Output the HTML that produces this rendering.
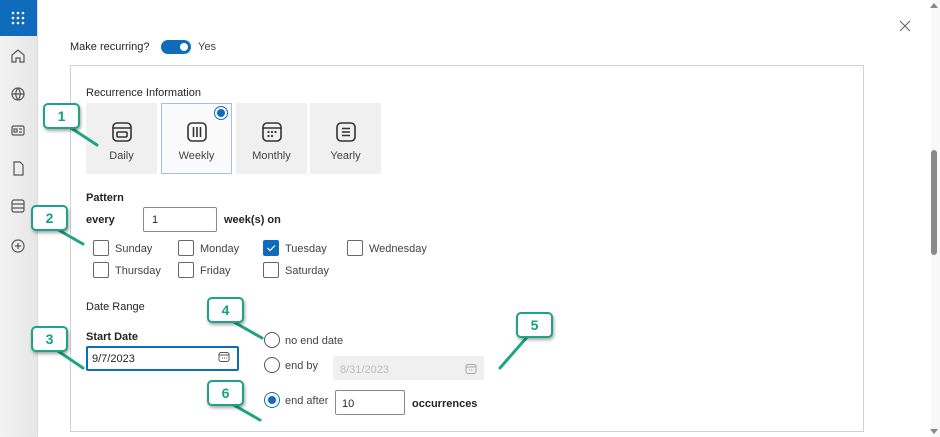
<!DOCTYPE html><html><head><style>
body{margin:0;width:940px;height:437px;overflow:hidden;background:#fff;font-family:"Liberation Sans",sans-serif;font-size:11px;color:#242424;position:relative}
.a{position:absolute}
.b{font-weight:bold}
.tile{position:absolute;top:103px;width:71px;height:71px;background:#f0f0f0;text-align:center;font-size:11px;color:#424242}
.tile svg{position:absolute;left:25px;top:18px}
.tile span{position:absolute;left:0;right:0;top:47px}
.cb{position:absolute;width:14px;height:14px;border:1px solid #666;border-radius:2px;background:#fff}
.rd{position:absolute;width:14px;height:14px;border:1px solid #555;border-radius:50%;background:#fff}
.call{position:absolute;width:33px;height:22px;border:2px solid #1fa385;border-radius:5px;background:#fff;color:#16a07c;font-weight:bold;font-size:14px;text-align:center;line-height:22px;box-shadow:1px 2px 3px rgba(0,0,0,.35)}
.t{margin-top:2px}
</style></head><body>
<div class="a" style="left:0;top:0;width:37px;height:437px;background:linear-gradient(90deg,#f3f3f3,#e6e6e6);border-right:1px solid #ddd"></div>
<div class="a" style="left:0;top:0;width:37px;height:36px;background:#0f6cbd"></div>
<svg class="a" style="left:11px;top:11px" width="14" height="14"><g fill="#fff"><circle cx="2" cy="2" r="1.3"/><circle cx="7" cy="2" r="1.3"/><circle cx="12" cy="2" r="1.3"/><circle cx="2" cy="7" r="1.3"/><circle cx="7" cy="7" r="1.3"/><circle cx="12" cy="7" r="1.3"/><circle cx="2" cy="12" r="1.3"/><circle cx="7" cy="12" r="1.3"/><circle cx="12" cy="12" r="1.3"/></g></svg>
<svg class="a" style="left:10px;top:48px" width="16" height="210" fill="none" stroke="#555" stroke-width="1.2">
<path d="M2 14V7l6-5 6 5v7h-4v-4H6v4z"/>
<circle cx="8" cy="46" r="6"/><path d="M2 46h12M8 40c-3 4-3 8 0 12M8 40c3 4 3 8 0 12"/>
<rect x="2" y="78" width="12" height="9" rx="1.5"/><path d="M4 81h3v3H4zM9 81h3M9 84h3"/>
<path d="M4 114h6l3 3v10H4z"/>
<rect x="2" y="152" width="12" height="12" rx="2"/><path d="M2 156h12M2 160h12"/>
<circle cx="8" cy="198" r="6"/><path d="M8 195v6M5 198h6"/></svg>
<svg class="a" style="left:899px;top:20px" width="12" height="12" stroke="#666" stroke-width="1.1"><path d="M1 1l10 10M11 1L1 11"/></svg>
<div class="a" style="left:931px;top:0;width:9px;height:437px;background:#f8f8f8"></div>
<div class="a" style="left:931px;top:150px;width:6px;height:105px;background:#8a8a8a;border-radius:3px"></div>
<div class="a" style="left:930px;top:3px;width:0;height:0;border:4px solid transparent;border-bottom:5px solid #888;border-top:0"></div>
<div class="a" style="left:930px;top:429px;width:0;height:0;border:4px solid transparent;border-top:5px solid #888;border-bottom:0"></div>
<div class="a" style="left:70px;top:41px">Make recurring?</div>
<div class="a" style="left:161px;top:40px;width:30px;height:14px;background:#0f6cbd;border-radius:8px"></div>
<div class="a" style="left:180px;top:43px;width:8px;height:8px;background:#fff;border-radius:50%"></div>
<div class="a" style="left:198px;top:41px;color:#424242">Yes</div>
<div class="a" style="left:70px;top:65px;width:792px;height:365px;border:1px solid #d1d1d1"></div>
<div class="a" style="left:86px;top:87px">Recurrence Information</div>
<div class="tile" style="left:86px"><svg width="22" height="22" fill="none" stroke="#333" stroke-width="1.6"><rect x="2" y="2" width="18" height="18" rx="4"/><path d="M2 7h18"/><rect x="6" y="11" width="10" height="5" rx="1"/></svg><span>Daily</span></div>
<div class="tile" style="left:161px;background:#fafafa;border:1px solid #9ec3e6;width:69px;height:69px"><svg width="22" height="22" fill="none" stroke="#333" stroke-width="1.6" style="left:24px;top:17px"><rect x="2" y="2" width="18" height="18" rx="4"/><path d="M7.5 6v10M11 6v10M14.5 6v10"/></svg><span style="top:46px">Weekly</span></div>
<div class="a" style="left:214px;top:106px;width:12px;height:12px;border:1px solid #0f6cbd;border-radius:50%;background:#fff"></div>
<div class="a" style="left:217px;top:109px;width:8px;height:8px;background:#0f6cbd;border-radius:50%"></div>
<div class="tile" style="left:236px"><svg width="22" height="22" fill="none" stroke="#333" stroke-width="1.6"><rect x="2" y="2" width="18" height="18" rx="4"/><path d="M2 7h18"/><g fill="#333" stroke="none"><circle cx="7.5" cy="11" r="1.1"/><circle cx="11" cy="11" r="1.1"/><circle cx="14.5" cy="11" r="1.1"/><circle cx="7.5" cy="15" r="1.1"/><circle cx="11" cy="15" r="1.1"/></g></svg><span>Monthly</span></div>
<div class="tile" style="left:310px"><svg width="22" height="22" fill="none" stroke="#333" stroke-width="1.6"><rect x="2" y="2" width="18" height="18" rx="4"/><path d="M7 7.5h8M7 11h8M7 14.5h8"/></svg><span>Yearly</span></div>
<div class="a b" style="left:86px;top:192px">Pattern</div>
<div class="a b" style="left:86px;top:214px">every</div>
<div class="a" style="left:143px;top:207px;width:72px;height:23px;border:1px solid #888;border-radius:2px"></div>
<div class="a" style="left:152px;top:214px">1</div>
<div class="a b" style="left:224px;top:214px">week(s) on</div>
<div class="cb" style="left:93px;top:240px"></div><div class="a" style="left:115px;top:243px;color:#424242">Sunday</div>
<div class="cb" style="left:178px;top:240px"></div><div class="a" style="left:200px;top:243px;color:#424242">Monday</div>
<div class="cb" style="left:263px;top:240px;background:#0f6cbd;border-color:#0f6cbd"></div><svg class="a" style="left:266px;top:243px" width="10" height="10"><path d="M1.5 5l2.5 2.5 5-5" stroke="#fff" fill="none" stroke-width="1.2"/></svg><div class="a" style="left:285px;top:243px;color:#424242">Tuesday</div>
<div class="cb" style="left:347px;top:240px"></div><div class="a" style="left:369px;top:243px;color:#424242">Wednesday</div>
<div class="cb" style="left:93px;top:262px"></div><div class="a" style="left:115px;top:265px;color:#424242">Thursday</div>
<div class="cb" style="left:178px;top:262px"></div><div class="a" style="left:200px;top:265px;color:#424242">Friday</div>
<div class="cb" style="left:263px;top:262px"></div><div class="a" style="left:285px;top:265px;color:#424242">Saturday</div>
<div class="a" style="left:86px;top:301px">Date Range</div>
<div class="a b" style="left:86px;top:331px">Start Date</div>
<div class="a" style="left:86px;top:346px;width:149px;height:21px;border:2px solid #0f6cbd;border-radius:2px"></div>
<div class="a" style="left:92px;top:353px">9/7/2023</div>
<svg class="a" style="left:218px;top:351px" width="12" height="12" fill="none" stroke="#555"><rect x="1" y="1.5" width="10" height="9" rx="2"/><path d="M1 4h10M4 7h1M6 7h1M8 7h1"/></svg>
<div class="rd" style="left:264px;top:332px"></div><div class="a" style="left:285px;top:335px;color:#424242">no end date</div>
<div class="rd" style="left:264px;top:357px"></div><div class="a" style="left:285px;top:360px;color:#424242">end by</div>
<div class="a" style="left:333px;top:356px;width:151px;height:24px;background:#f0f0f0"></div>
<div class="a" style="left:340px;top:364px;color:#bdbdbd">8/31/2023</div>
<svg class="a" style="left:465px;top:363px" width="12" height="12" fill="none" stroke="#aaa"><rect x="1" y="1.5" width="10" height="9" rx="2"/><path d="M1 4h10M4 7h1M6 7h1"/></svg>
<div class="rd" style="left:264px;top:392px;border-color:#0f6cbd"></div><div class="a" style="left:268px;top:396px;width:8px;height:8px;border-radius:50%;background:#0f6cbd"></div>
<div class="a" style="left:285px;top:395px;color:#424242">end after</div>
<div class="a" style="left:335px;top:390px;width:68px;height:23px;border:1px solid #888;border-radius:2px"></div>
<div class="a" style="left:342px;top:398px">10</div>
<div class="a b" style="left:412px;top:398px">occurrences</div>
<svg class="a" style="left:0;top:0" width="940" height="437" stroke="#1fa385" stroke-width="3" fill="none" stroke-linecap="round">
<path d="M68 126L97 145"/><path d="M55 228L83 244"/><path d="M55 349L83 368"/><path d="M232 321L262 338"/><path d="M528 336L500 368"/><path d="M232 404L260 420"/></svg>
<div class="call" style="left:43px;top:103px">1</div>
<div class="call" style="left:31px;top:205px">2</div>
<div class="call" style="left:31px;top:326px">3</div>
<div class="call" style="left:207px;top:297px">4</div>
<div class="call" style="left:516px;top:312px">5</div>
<div class="call" style="left:207px;top:380px">6</div>
</body></html>
